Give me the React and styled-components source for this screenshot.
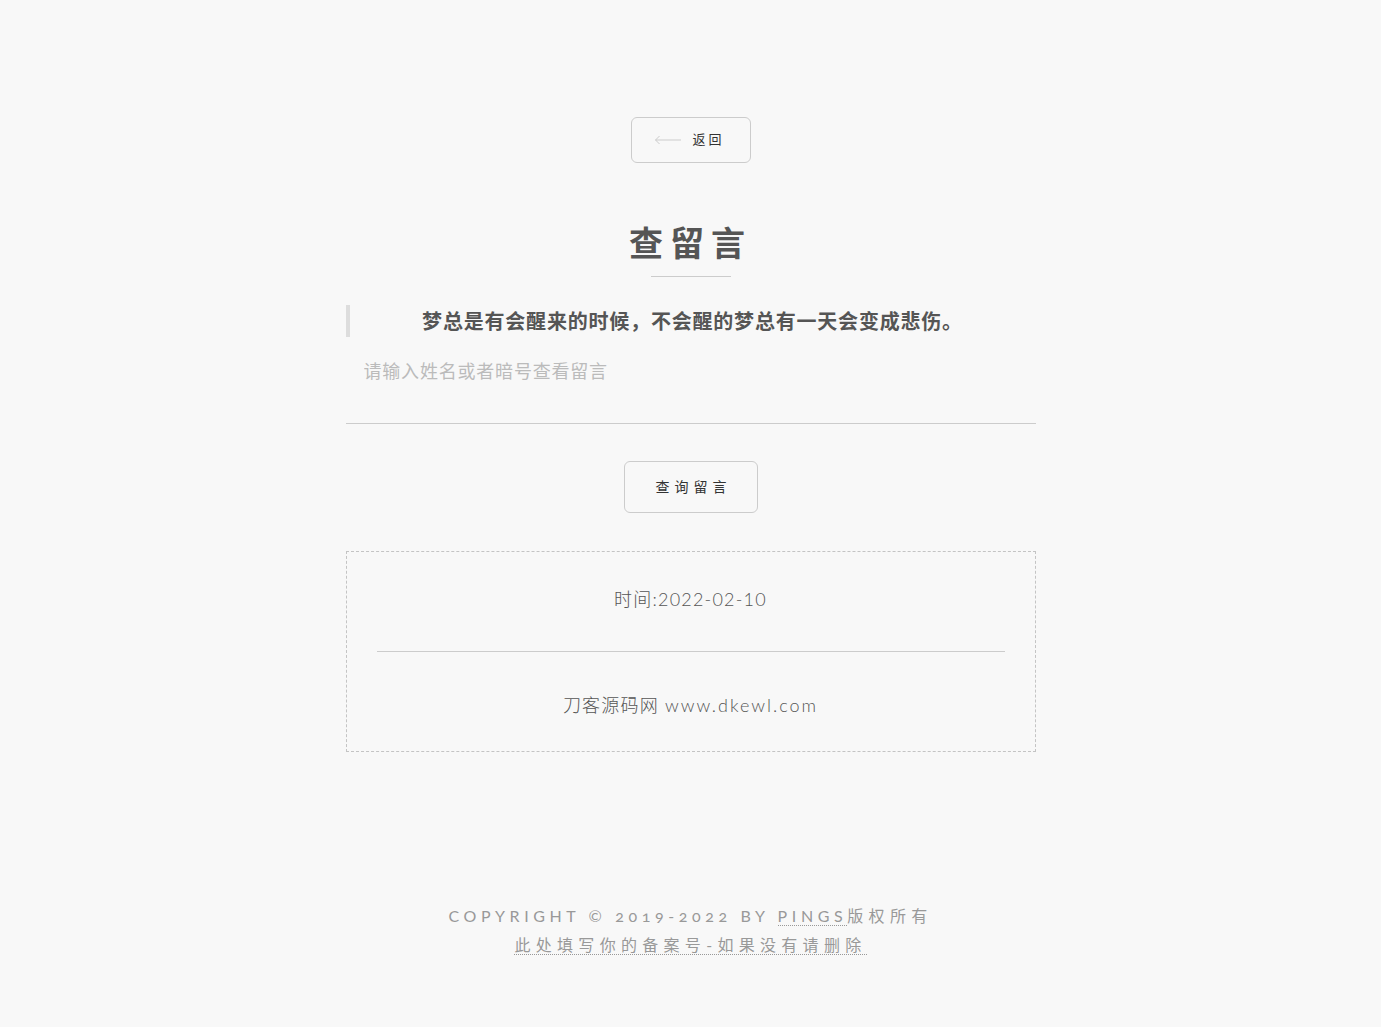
import React, { useState } from 'react';
import styled, { createGlobalStyle } from 'styled-components';

const GlobalStyle = createGlobalStyle`
    html, body {
        margin: 0;
        padding: 0;
        background: #f8f8f8;
    }
    body {
        font-family: Lato, "Noto Sans CJK SC", sans-serif;
        color: #555;
    }
`;

export default function App() {
    const [name, setName] = useState('');

    return (
        <Page>
            <GlobalStyle />
            <Main>
                <BackButton href="#">
                    <ArrowIcon width="28" height="10" viewBox="0 0 28 10">
                        <path d="M27 5H1.5M5.5 1L1.5 5L5.5 9" fill="none" stroke="#ccc" strokeWidth="1" />
                    </ArrowIcon>
                    返回
                </BackButton>

                <Title>查留言</Title>
                <TitleRule />

                <Quote>梦总是有会醒来的时候，不会醒的梦总有一天会变成悲伤。</Quote>

                <SearchInput
                    value={name}
                    placeholder="请输入姓名或者暗号查看留言"
                    onChange={(e) => setName(e.target.value)}
                />

                <QueryButton type="button">查询留言</QueryButton>

                <ResultBox>
                    <ResultLine>时间:2022-02-10</ResultLine>
                    <ResultRule />
                    <ResultLine>
                        刀客源码网 <Url>www.dkewl.com</Url>
                    </ResultLine>
                </ResultBox>
            </Main>

            <Footer>
                <FooterLine>
                    COPYRIGHT © <OldNum>2019-2022</OldNum> BY <FooterLink href="#">PINGS</FooterLink>
                    <Cjk>版权所有</Cjk>
                </FooterLine>
                <FooterLine>
                    <FooterLink href="#">
                        <Cjk>此处填写你的备案号-如果没有请删除</Cjk>
                    </FooterLink>
                </FooterLine>
            </Footer>
        </Page>
    );
}

const Page = styled.div`
    min-height: 1027px;
    display: flex;
    flex-direction: column;
    align-items: center;
`;

const Main = styled.div`
    width: 690px;
    padding-top: 117px;
    display: flex;
    flex-direction: column;
    align-items: center;
`;

const BackButton = styled.a`
    box-sizing: border-box;
    width: 120px;
    height: 46px;
    border: 1px solid #ccc;
    border-radius: 6px;
    display: flex;
    align-items: center;
    justify-content: center;
    gap: 10px;
    padding: 0 2px 3px 0;
    font-size: 13px;
    letter-spacing: 3px;
    color: #333;
    text-decoration: none;
    font-family: "Noto Sans CJK SC", sans-serif;
`;

const ArrowIcon = styled.svg`
    display: block;
    margin-top: 3px;
`;

const Title = styled.h1`
    margin: 58px 0 0;
    font-size: 34px;
    line-height: 41px;
    font-weight: 700;
    letter-spacing: 7px;
    color: #555;
    font-family: "Noto Sans CJK SC", sans-serif;
`;

const TitleRule = styled.div`
    width: 80px;
    height: 1px;
    background: #ccc;
    margin-top: 14px;
`;

const Quote = styled.blockquote`
    align-self: stretch;
    margin: 28px 0 0;
    border-left: 4px solid #ddd;
    height: 32px;
    line-height: 32px;
    text-align: center;
    font-size: 20px;
    font-weight: 700;
    letter-spacing: 0.8px;
    color: #555;
    font-family: "Noto Sans CJK SC", sans-serif;
`;

const SearchInput = styled.input`
    align-self: stretch;
    box-sizing: border-box;
    margin-top: 10px;
    height: 77px;
    padding: 11px 18px 41px;
    line-height: 24px;
    border: none;
    border-bottom: 1px solid #ccc;
    background: transparent;
    outline: none;
    font-size: 18px;
    color: #555;
    font-family: "Noto Sans CJK SC", sans-serif;
    letter-spacing: 0.8px;

    &::placeholder {
        color: #bbb;
    }
`;

const QueryButton = styled.button`
    box-sizing: border-box;
    margin-top: 37px;
    width: 134px;
    height: 52px;
    border: 1px solid #ccc;
    border-radius: 6px;
    background: transparent;
    font-size: 14px;
    letter-spacing: 5px;
    padding: 0 0 3px 6px;
    color: #333;
    font-family: "Noto Sans CJK SC", sans-serif;
    cursor: pointer;
`;

const ResultBox = styled.div`
    align-self: stretch;
    box-sizing: border-box;
    margin-top: 38px;
    height: 201px;
    padding: 30px 30px 29px;
    border: 1px dashed #c4c4c4;
    display: flex;
    flex-direction: column;
    align-items: center;
`;

const ResultLine = styled.p`
    margin: 0;
    font-size: 18px;
    line-height: 34px;
    font-weight: 300;
    color: #555;
    letter-spacing: 1.2px;
`;

const Url = styled.span`
    letter-spacing: 2px;
`;

const ResultRule = styled.div`
    align-self: stretch;
    height: 1px;
    background: #ccc;
    margin: 35px 0 36px;
`;

const Footer = styled.footer`
    margin-top: 149px;
    text-align: center;
    font-size: 16px;
    line-height: 29px;
    letter-spacing: 4.6px;
    color: #999;
`;

const FooterLine = styled.div``;

const Cjk = styled.span`
    letter-spacing: 5.3px;
`;

const OldNum = styled.span`
    font-variant-numeric: oldstyle-nums;
`;

const FooterLink = styled.a`
    color: #999;
    text-decoration: none;
    border-bottom: 1px dotted #999;
`;
